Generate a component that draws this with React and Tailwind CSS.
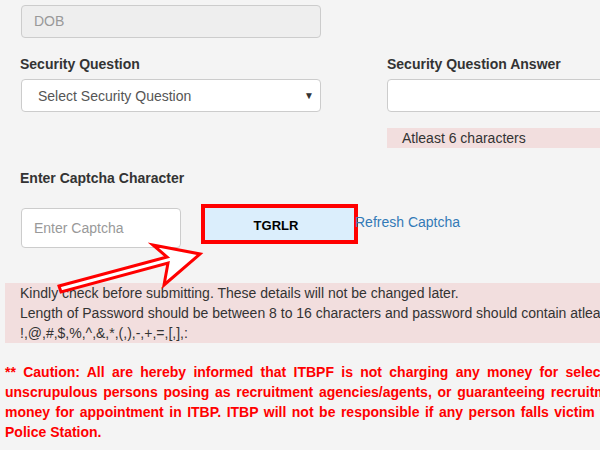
const cautionLines = [
  { text: '** Caution: All are hereby informed that ITBPF is not charging any money for selection/recruitment.', ws: '[word-spacing:3.4px]' },
  { text: 'unscrupulous persons posing as recruitment agencies/agents, or guaranteeing recruitment', ws: '[word-spacing:1.8px]' },
  { text: 'money for appointment in ITBP. ITBP will not be responsible if any person falls victim to such', ws: '[word-spacing:1.6px]' },
]

function Arrow() {
  return (
    <svg className="pointer-events-none absolute left-0 top-0" width="600" height="450">
      <polygon
        points="59,286 167,257 153,245 200,254 164,285 168,263 61,292"
        fill="#fff"
        stroke="#ff0000"
        strokeWidth="3"
        strokeLinejoin="miter"
      />
    </svg>
  )
}

export default function App() {
  return (
    <div className="relative h-[450px] w-[600px] overflow-hidden bg-[#f4f4f4] font-['Liberation_Sans',Arial,sans-serif] text-[14px] leading-[20px] text-[#333]">
      <div className="w-[820px] pl-[5px]">
        <div className="pl-[15px] pt-[5px]">
          <div className="ml-px h-[33px] w-[300px] rounded border border-[#ccc] bg-[#eee] px-3 leading-[31px] text-[#999]">
            DOB
          </div>
        </div>

        <div className="mt-[16px] flex">
          <div className="w-[367px] pl-[15px]">
            <div className="font-bold">Security Question</div>
            <div className="ml-px mt-[5px] flex h-[33px] w-[300px] items-center justify-between rounded border border-[#ccc] bg-white pl-[16px] pr-[6px] text-[#555]">
              <span>Select Security Question</span>
              <span className="text-[10px] text-[#333]">▼</span>
            </div>
          </div>
          <div className="pl-[15px]">
            <div className="font-bold">Security Question Answer</div>
            <div className="mt-[5px] h-[33px] w-[300px] rounded border border-[#ccc] bg-white" />
            <div className="mt-[16px] h-[20px] w-[300px] bg-[#f2dede] pl-[15px]">Atleast 6 characters</div>
          </div>
        </div>

        <div className="mt-[20px] pl-[15px]">
          <div className="font-bold">Enter Captcha Character</div>
          <div className="mt-[16px] flex items-start">
            <div className="ml-px mt-[4px] h-[40px] w-[160px] rounded border border-[#ccc] bg-white px-3 leading-[38px] text-[#999]">
              Enter Captcha
            </div>
            <div className="ml-[20px] flex h-[40px] w-[157px] items-center justify-center border-[4px] border-[#ff0000] bg-[#dbeefc] pr-[7px] pt-[4px] text-[13px] font-bold text-black">
              TGRLR
            </div>
            <a href="#" className="-ml-[3px] mt-[8px] text-[#337ab7]">
              Refresh Captcha
            </a>
          </div>
        </div>

        <div className="mt-[35px] bg-[#f2dede] pl-[15px]">
          <div>Kindly check before submitting. These details will not be changed later.</div>
          <div>Length of Password should be between 8 to 16 characters and password should contain atleast one special character</div>
          <div>!,@,#,$,%,^,&amp;,*,(,),-,+,=,[,],:</div>
        </div>

        <div className="mt-[19px] font-bold text-[#ff0000]">
          {cautionLines.map((l) => (
            <div key={l.text} className={`whitespace-nowrap ${l.ws}`}>
              {l.text}
            </div>
          ))}
          <div>Police Station.</div>
        </div>
      </div>
      <Arrow />
    </div>
  )
}
